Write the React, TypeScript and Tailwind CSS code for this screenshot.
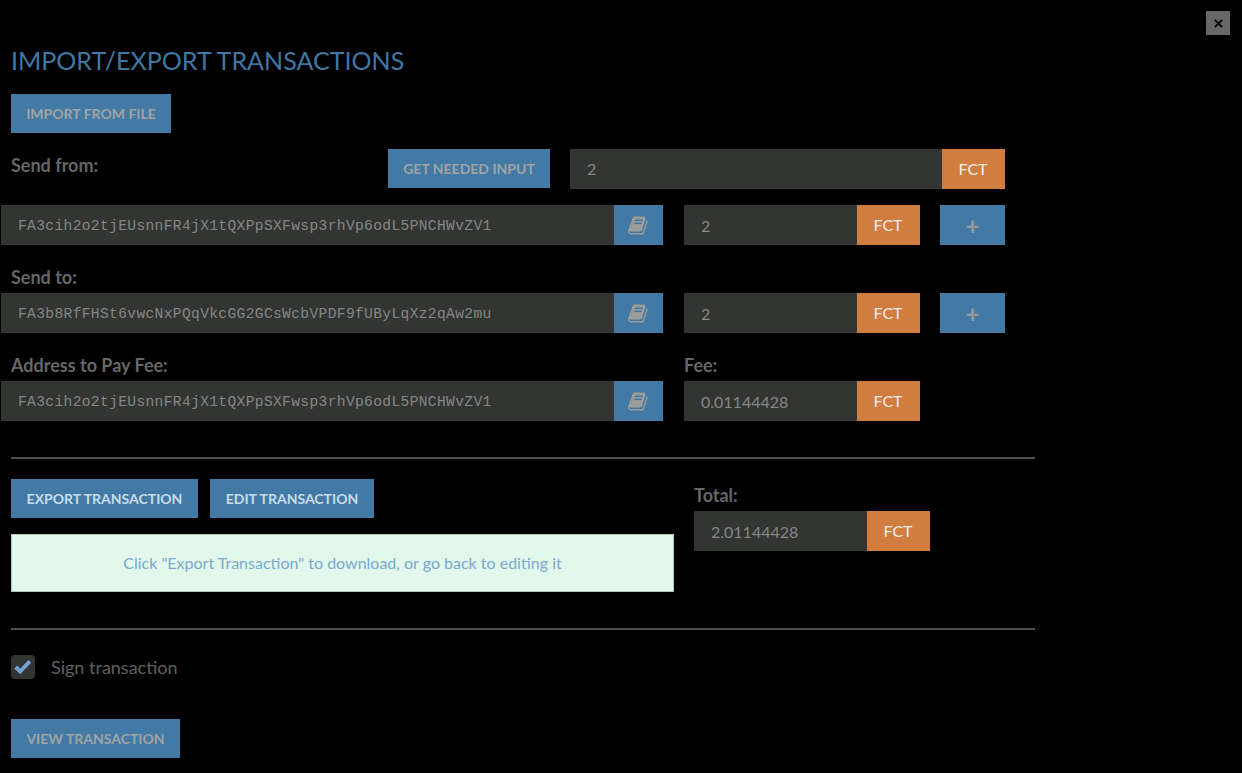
import type { FC, ReactNode } from "react";

const BOOK_PATH =
  "M1639 478q40 57 18 129l-275 906q-19 64-76.5 107.5t-122.5 43.5h-923q-77 0-148.5-53.5t-99.5-131.5q-24-67-2-127 0-4 3-27t4-37q1-8-3-21.5t-3-19.5q2-11 8-21t16.5-23.5 16.5-23.5q23-38 45-91.5t30-91.5q3-10 .5-30t-.5-28q3-11 17-28t17-23q21-36 42-92t25-90q1-9-2.5-32t.5-28q4-13 22-30.5t22-22.5q19-26 42.5-84.5t27.5-96.5q1-8-3-25.5t-2-26.5q2-8 9-18t18-23 17-21q8-12 16.5-30.5t15-35 16-36 19.5-32 26.5-23.5 36-11.5 47.5 5.5l-1 3q38-9 51-9h761q74 0 114 56t18 130l-274 906q-36 119-71.5 153.5t-128.5 34.5h-869q-27 0-38 15-11 16-1 43 24 70 144 70h923q29 0 56-15.5t35-41.5l300-987q7-22 5-57 38 15 59 43zm-1064 2q-4 13 2 22.5t20 9.5h608q13 0 25.5-9.5t16.5-22.5l21-64q4-13-2-22.5t-20-9.5h-608q-13 0-25.5 9.5t-16.5 22.5zm-83 256q-4 13 2 22.5t20 9.5h608q13 0 25.5-9.5t16.5-22.5l21-64q4-13-2-22.5t-20-9.5h-608q-13 0-25.5 9.5t-16.5 22.5z";

const Btn: FC<{ children: ReactNode; className?: string; bright?: boolean }> = ({
  children,
  className = "",
  bright = false,
}) => (
  <button
    className={`flex h-[39px] items-center justify-center bg-[#437aa5] text-[14px] font-bold ${
      bright ? "text-[#c6dcec]" : "text-[#a1a3a3]"
    } ${className}`}
  >
    {children}
  </button>
);

const Amount: FC<{ value: string; className: string; textPad?: string }> = ({
  value,
  className,
  textPad = "pl-[17px] pt-[2px]",
}) => (
  <div className={`flex h-10 ${className}`}>
    <div className={`flex flex-1 items-center bg-[#333533] text-[16px] text-[#858785] ${textPad}`}>
      {value}
    </div>
    <div className="flex w-[63px] items-center justify-center bg-[#d27d40] pr-px text-[16px] text-[#f4efe9]">
      FCT
    </div>
  </div>
);

const Address: FC<{ value: string }> = ({ value }) => (
  <div className="flex h-10 w-[662px]">
    <div className="flex w-[613px] items-center bg-[#333533] pl-[17px] pt-[3px] font-['Liberation_Mono',monospace] text-[14.6px] tracking-[0.35px] text-[#858785]">
      {value}
    </div>
    <div className="flex w-[49px] items-center justify-center bg-[#437aa5]">
      <svg viewBox="0 0 1792 1792" className="h-[21px] w-[21px] fill-[#9b9d9d]">
        <path d={BOOK_PATH} />
      </svg>
    </div>
  </div>
);

const Plus = () => (
  <div className="ml-5 flex h-10 w-[65px] items-center justify-center bg-[#437aa5] pt-[2px] text-[24px] font-bold leading-none text-[#8f9a9f]">
    +
  </div>
);

const Label: FC<{ children: ReactNode; className?: string }> = ({ children, className = "" }) => (
  <div className={`text-[18px] font-bold leading-[22px] text-[#666766] ${className}`}>{children}</div>
);

export default function App() {
  return (
    <div className="relative h-[773px] w-[1242px] overflow-hidden bg-black font-['Lato',sans-serif] [text-rendering:optimizeLegibility]">
      <button className="absolute right-[12px] top-[11px] flex h-6 w-6 items-center justify-center bg-[#666766]">
        <svg viewBox="0 0 10 10" className="h-[9px] w-[9px] stroke-black stroke-[2]">
          <path d="M1 1l8 8M9 1l-8 8" />
        </svg>
      </button>

      <div className="pt-[43px]">
        <h1 className="pl-[11px] text-[25.05px] leading-[34px] text-[#3f78a5]">IMPORT/EXPORT TRANSACTIONS</h1>

        <div className="mt-[17px] pl-[11px]">
          <Btn className="w-[160px]">IMPORT FROM FILE</Btn>
        </div>

        <div className="mt-[16px] flex">
          <Label className="w-[388px] pl-[11px] pt-[5px]">Send from:</Label>
          <Btn className="w-[162px]">GET NEEDED INPUT</Btn>
          <Amount value="2" className="ml-5 w-[435px]" textPad="pl-[17px]" />
        </div>

        <div className="mt-[16px] flex pl-px">
          <Address value="FA3cih2o2tjEUsnnFR4jX1tQXPpSXFwsp3rhVp6odL5PNCHWvZV1" />
          <Amount value="2" className="ml-[21px] w-[236px]" />
          <Plus />
        </div>

        <Label className="mt-[21px] pl-[11px]">Send to:</Label>
        <div className="mt-[5px] flex pl-px">
          <Address value="FA3b8RfFHSt6vwcNxPQqVkcGG2GCsWcbVPDF9fUByLqXz2qAw2mu" />
          <Amount value="2" className="ml-[21px] w-[236px]" />
          <Plus />
        </div>

        <div className="mt-[21px] flex">
          <Label className="w-[684px] pl-[11px]">Address to Pay Fee:</Label>
          <Label>Fee:</Label>
        </div>
        <div className="mt-[5px] flex pl-px">
          <Address value="FA3cih2o2tjEUsnnFR4jX1tQXPpSXFwsp3rhVp6odL5PNCHWvZV1" />
          <Amount value="0.01144428" className="ml-[21px] w-[236px]" />
        </div>

        <div className="ml-[11px] mt-9 h-[2px] w-[1024px] bg-[#4f4f4f]" />

        <div className="mt-[20px] flex pl-[11px]">
          <div className="w-[663px]">
            <div className="flex gap-3">
              <Btn bright className="w-[187px]">EXPORT TRANSACTION</Btn>
              <Btn bright className="w-[164px]">EDIT TRANSACTION</Btn>
            </div>
            <div className="mt-4 flex h-[58px] items-center justify-center border border-[#a9c9b5] bg-[#e1f8ea] text-[16px] text-[#79a9d2]">
              Click "Export Transaction" to download, or go back to editing it
            </div>
          </div>
          <div className="ml-5 pt-[5px]">
            <Label>Total:</Label>
            <Amount value="2.01144428" className="mt-[5px] w-[236px]" />
          </div>
        </div>

        <div className="ml-[11px] mt-9 h-[2px] w-[1024px] bg-[#4f4f4f]" />

        <div className="mt-[25px] flex items-center pl-[11px]">
          <div className="flex h-6 w-6 items-center justify-center rounded-[4px] bg-[#333533]">
            <svg viewBox="0 0 16 16" className="h-[18px] w-[18px] fill-none stroke-[#6ea4cf] stroke-[3.5]">
              <path d="M1.5 8l4 4 8.5-9" />
            </svg>
          </div>
          <span className="ml-4 text-[18px] leading-6 text-[#5f605f]">Sign transaction</span>
        </div>

        <div className="mt-[40px] pl-[11px]">
          <Btn className="w-[169px]">VIEW TRANSACTION</Btn>
        </div>
      </div>
    </div>
  );
}
